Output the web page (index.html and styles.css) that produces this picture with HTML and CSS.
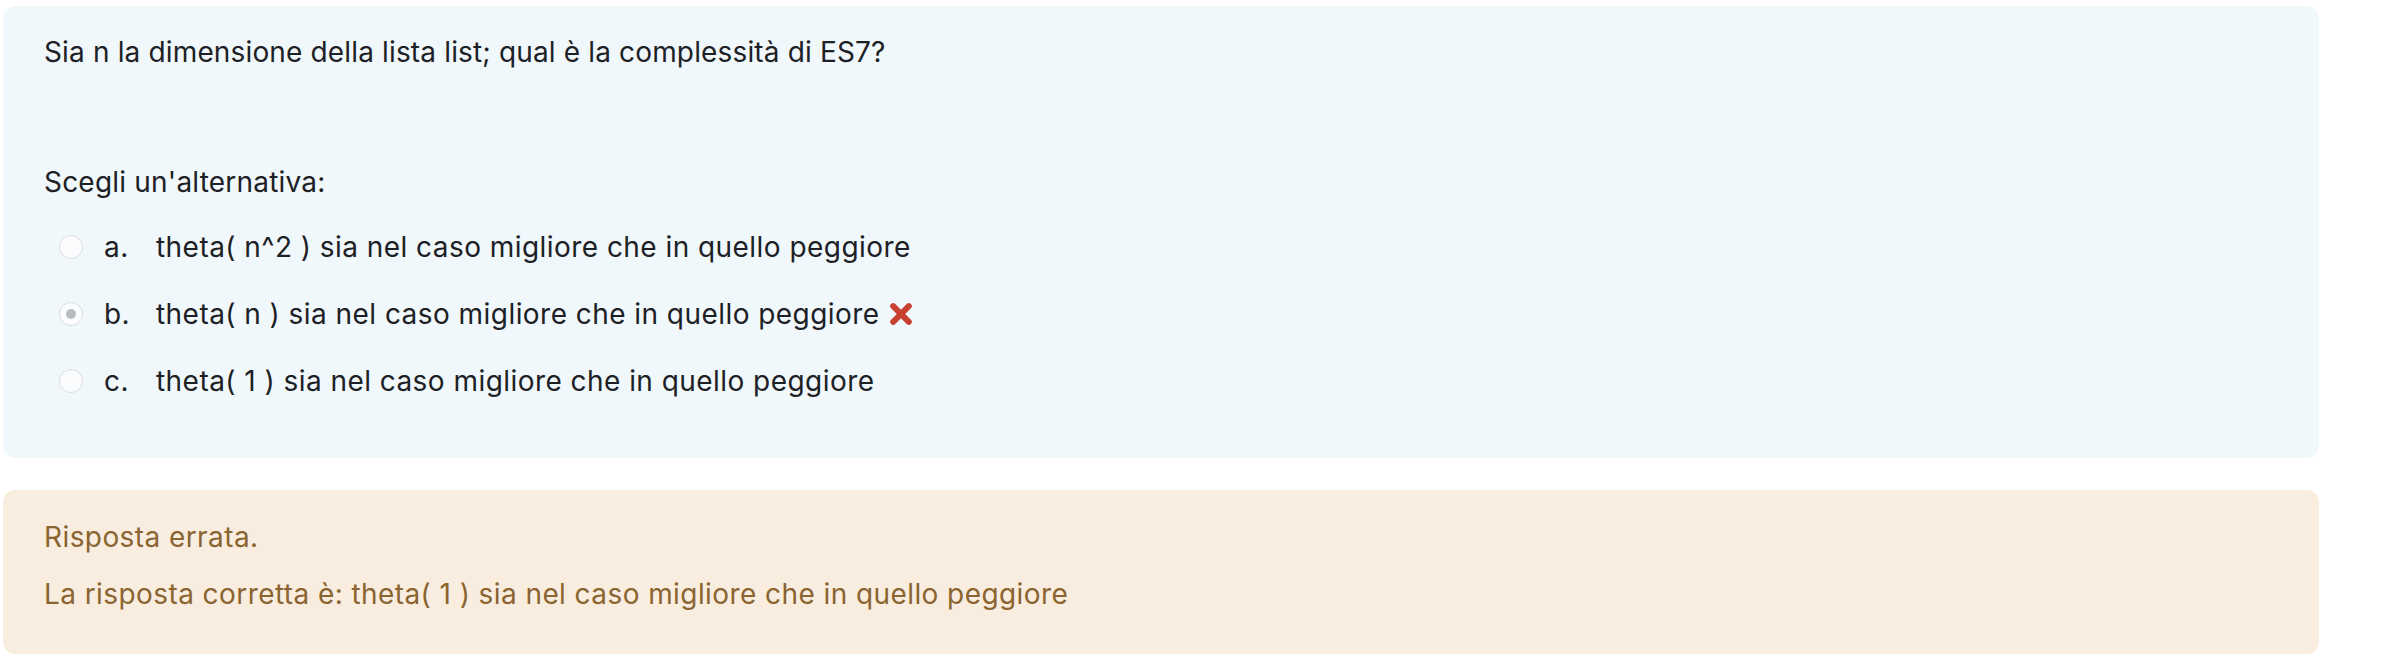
FILE: index.html
```html
<!DOCTYPE html>
<html lang="it">
<head>
<meta charset="utf-8">
<title>Domanda</title>
<link rel="stylesheet" href="styles.css">
</head>
<body>
<div class="page">
  <div class="formulation">
    <div class="qtext">Sia n la dimensione della lista list; qual è la complessità di ES7?</div>
    <div class="prompt">Scegli un'alternativa:</div>
    <div class="answers">
      <div class="option">
        <span class="radio"></span>
        <span class="letter">a.</span>
        <span class="label">theta( n^2 ) sia nel caso migliore che in quello peggiore</span>
      </div>
      <div class="option">
        <span class="radio checked"></span>
        <span class="letter">b.</span>
        <span class="label">theta( n ) sia nel caso migliore che in quello peggiore</span>
        <svg class="wrong" viewBox="0 0 20 20" width="24" height="24"><path d="M3.5 3.5 L16.5 16.5 M16.5 3.5 L3.5 16.5" stroke="#c8402f" stroke-width="5" stroke-linecap="round"/></svg>
      </div>
      <div class="option">
        <span class="radio"></span>
        <span class="letter">c.</span>
        <span class="label">theta( 1 ) sia nel caso migliore che in quello peggiore</span>
      </div>
    </div>
  </div>
  <div class="outcome">
    <div class="feedback">Risposta errata.</div>
    <div class="feedback">La risposta corretta è: theta( 1 ) sia nel caso migliore che in quello peggiore</div>
  </div>
</div>
</body>
</html>
```
FILE: styles.css
```css
html, body {
  margin: 0;
  background: #ffffff;
}
body {
  font-family: Inter, "Noto Sans", sans-serif;
  font-size: 28px;
  line-height: 42px;
  letter-spacing: 0.15px;
  color: #1d2125;
}
.page {
  width: 2316px;
  padding: 6px 0 0 3px;
  display: flex;
  flex-direction: column;
  gap: 32px;
}
.formulation {
  background: #f0f8fc;
  border-radius: 12px;
  padding: 25px 41px 56px;
}
.qtext {
  margin-bottom: 88px;
}
.prompt {
  margin-bottom: 23px;
  letter-spacing: 0.2px;
}
.answers {
  display: flex;
  flex-direction: column;
  gap: 25px;
  letter-spacing: 0.45px;
}
.option {
  display: flex;
  align-items: center;
}
.radio {
  width: 22px;
  height: 22px;
  border: 1px solid #dadce0;
  border-radius: 50%;
  background: #fbfcfd;
  margin: 0 21px 0 15px;
  display: flex;
  align-items: center;
  justify-content: center;
  box-sizing: content-box;
}
.radio.checked::after {
  content: "";
  width: 10px;
  height: 10px;
  border-radius: 50%;
  background: #b9bcbf;
}
.letter {
  width: 52px;
}
.wrong {
  margin-left: 9px;
}
.outcome {
  background: #f9eddf;
  color: #8a6431;
  border-radius: 12px;
  padding: 26px 41px 39px;
  display: flex;
  flex-direction: column;
  gap: 15px;
  letter-spacing: 0.42px;
}
```
